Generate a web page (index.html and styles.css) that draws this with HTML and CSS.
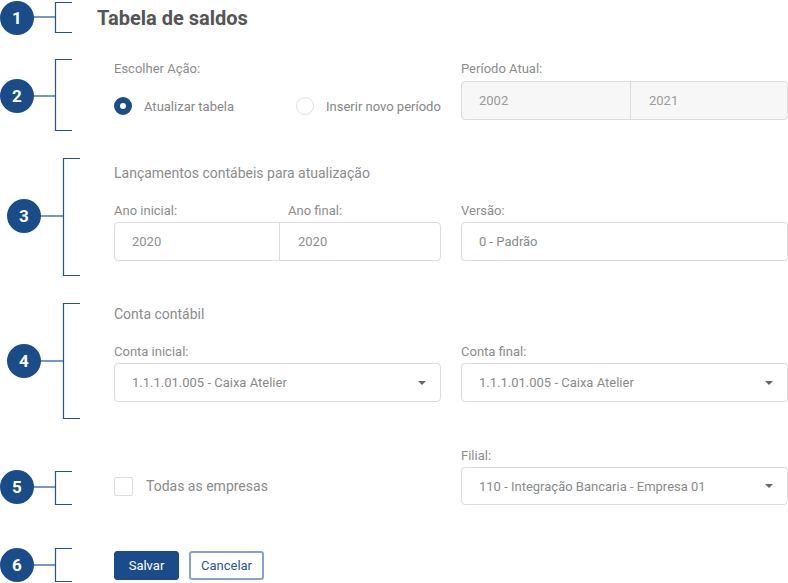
FILE: index.html
```html
<!DOCTYPE html>
<html lang="pt-BR">
<head>
<meta charset="utf-8">
<title>Tabela de saldos</title>
<link rel="stylesheet" href="styles.css">
</head>
<body>
<div class="page">
  <svg class="notes" width="100" height="583" viewBox="0 0 100 583" aria-hidden="true">
    <g class="conn">
      <line x1="30" y1="17" x2="55" y2="17"/>
      <line x1="30" y1="96" x2="55" y2="96"/>
      <line x1="36" y1="216" x2="63" y2="216"/>
      <line x1="36" y1="361" x2="63" y2="361"/>
      <line x1="30" y1="487" x2="55" y2="487"/>
      <line x1="30" y1="565" x2="55" y2="565"/>
    </g>
    <g class="brk">
      <polyline points="72,2.5 55.5,2.5 55.5,32.5 72,32.5"/>
      <polyline points="72,59.5 55.5,59.5 55.5,130.5 72,130.5"/>
      <polyline points="80,158.5 63.5,158.5 63.5,275.5 80,275.5"/>
      <polyline points="80,303.5 63.5,303.5 63.5,418.5 80,418.5"/>
      <polyline points="72,471.5 55.5,471.5 55.5,504.5 72,504.5"/>
      <polyline points="72,548.5 55.5,548.5 55.5,581.5 72,581.5"/>
    </g>
    <g class="badge">
      <circle cx="17" cy="18" r="17"/>
      <circle cx="17" cy="96" r="17"/>
      <circle cx="24" cy="216" r="17"/>
      <circle cx="24" cy="361" r="17"/>
      <circle cx="17" cy="487" r="17"/>
      <circle cx="17" cy="565" r="17"/>
    </g>
    <g class="num">
      <text x="17" y="24">1</text>
      <text x="17" y="102">2</text>
      <text x="24" y="222">3</text>
      <text x="24" y="367">4</text>
      <text x="17" y="493">5</text>
      <text x="17" y="571">6</text>
    </g>
  </svg>

  <main class="form">
    <h1 class="title">Tabela de saldos</h1>

    <section class="row sec-action">
      <div class="field">
        <div class="label">Escolher Ação:</div>
        <div class="radios">
          <div class="radio"><span class="dot dot-on"></span><span>Atualizar tabela</span></div>
          <div class="radio"><span class="dot"></span><span>Inserir novo período</span></div>
        </div>
      </div>
      <div class="field">
        <div class="label">Período Atual:</div>
        <div class="split split-periodo is-disabled">
          <span class="cell">2002</span>
          <span class="cell cell-right">2021</span>
        </div>
      </div>
    </section>

    <section class="group">
      <div class="group-title">Lançamentos contábeis para atualização</div>
      <div class="row">
        <div class="field">
          <div class="split-labels">
            <span class="label">Ano inicial:</span>
            <span class="label label-right">Ano final:</span>
          </div>
          <div class="split split-ano">
            <span class="cell">2020</span>
            <span class="cell cell-right">2020</span>
          </div>
        </div>
        <div class="field">
          <div class="label">Versão:</div>
          <div class="input">0 - Padrão</div>
        </div>
      </div>
    </section>

    <section class="group">
      <div class="group-title">Conta contábil</div>
      <div class="row">
        <div class="field">
          <div class="label">Conta inicial:</div>
          <div class="input select"><span>1.1.1.01.005 - Caixa Atelier</span><span class="caret"></span></div>
        </div>
        <div class="field">
          <div class="label">Conta final:</div>
          <div class="input select"><span>1.1.1.01.005 - Caixa Atelier</span><span class="caret"></span></div>
        </div>
      </div>
    </section>

    <section class="row sec-empresa">
      <div class="check-wrap">
        <div class="check"><span class="box"></span><span>Todas as empresas</span></div>
      </div>
      <div class="field">
        <div class="label">Filial:</div>
        <div class="input select input-short"><span>110 - Integração Bancaria - Empresa 01</span><span class="caret"></span></div>
      </div>
    </section>

    <section class="actions">
      <button class="btn btn-primary" type="button">Salvar</button>
      <button class="btn btn-outline" type="button">Cancelar</button>
    </section>
  </main>
</div>
</body>
</html>
```

FILE: styles.css
```css
* { box-sizing: border-box; }

html, body {
  margin: 0;
  padding: 0;
  background: #ffffff;
}

body {
  font-family: Roboto, "Liberation Sans", Arial, sans-serif;
  color: #8a8a8a;
  width: 788px;
  height: 583px;
  overflow: hidden;
}

.page {
  position: relative;
  width: 788px;
  height: 583px;
}

/* annotation layer (diagram overlay) */
.notes {
  position: absolute;
  left: 0;
  top: 0;
}
.conn line {
  stroke: #7599c3;
  stroke-width: 2;
}
.brk polyline {
  fill: none;
  stroke: #24538f;
  stroke-width: 1.2;
}
.badge circle {
  fill: #1a4c89;
}
.num text {
  fill: #ffffff;
  font-family: Roboto, "Liberation Sans", Arial, sans-serif;
  font-weight: 700;
  font-size: 17px;
  text-anchor: middle;
}

/* form */
.form {
  margin-left: 114px;
  width: 674px;
  display: flex;
  flex-direction: column;
}

.title {
  margin: 6px 0 0 -17px;
  font-size: 20px;
  line-height: 24px;
  font-weight: 700;
  color: #555555;
}

.row {
  display: grid;
  grid-template-columns: 1fr 1fr;
  column-gap: 20px;
}

.sec-action { margin-top: 31px; }

.field {
  display: flex;
  flex-direction: column;
}

.label {
  font-size: 13px;
  line-height: 16px;
  color: #8c8c8c;
}
.field > .label { margin-bottom: 3px; }
.sec-action .field > .label { margin-bottom: 4px; }

.radios {
  margin-top: 15px;
  display: grid;
  grid-template-columns: 182px 1fr;
  height: 20px;
  align-items: center;
}
.radio {
  display: flex;
  align-items: center;
  gap: 12px;
  font-size: 13px;
  color: #868686;
  white-space: nowrap;
}
.dot {
  width: 18px;
  height: 18px;
  border-radius: 50%;
  border: 1px solid #e1e1e1;
  background: #ffffff;
  flex: none;
}
.dot-on {
  border: 6px solid #1a4c89;
  background: #ffffff;
}

.split {
  height: 39px;
  border: 1px solid #dcdcdc;
  border-radius: 4px;
  display: grid;
  align-items: center;
  font-size: 13px;
  color: #8f8f8f;
}
.split-periodo { grid-template-columns: 168px 1fr; }
.split-ano { grid-template-columns: 164px 1fr; }
.is-disabled {
  background: #f7f7f7;
  color: #9a9a9a;
}
.cell {
  height: 100%;
  display: flex;
  align-items: center;
  padding-left: 17px;
}
.cell-right {
  border-left: 1px solid #dcdcdc;
  padding-left: 18px;
}

.split-labels {
  display: grid;
  grid-template-columns: 165px 1fr;
  margin-bottom: 3px;
}
.label-right { padding-left: 9px; }

.group {
  margin-top: 44px;
  display: flex;
  flex-direction: column;
}
.group-title {
  font-size: 14px;
  line-height: 18px;
  color: #8c8c8c;
  margin-bottom: 21px;
}

.input {
  height: 39px;
  border: 1px solid #dcdcdc;
  border-radius: 4px;
  display: flex;
  align-items: center;
  padding: 0 14px 0 17px;
  font-size: 13px;
  color: #8a8a8a;
  white-space: nowrap;
}
.input-short { height: 38px; }
.select { justify-content: space-between; }
.caret {
  width: 0;
  height: 0;
  border-left: 4px solid transparent;
  border-right: 4px solid transparent;
  border-top: 4px solid #666666;
  flex: none;
}

.sec-empresa { margin-top: 46px; }
.check-wrap {
  display: flex;
  align-items: flex-end;
}
.check {
  height: 38px;
  display: flex;
  align-items: center;
  gap: 13px;
  font-size: 14px;
  color: #8a8a8a;
}
.box {
  width: 19px;
  height: 19px;
  border: 1px solid #dcdcdc;
  border-radius: 2px;
  background: #ffffff;
  flex: none;
}

.actions {
  margin-top: 46px;
  display: flex;
  gap: 10px;
}
.btn {
  height: 29px;
  border-radius: 3px;
  font-family: Roboto, "Liberation Sans", Arial, sans-serif;
  font-size: 13px;
  padding: 0;
  cursor: pointer;
}
.btn-primary {
  width: 65px;
  background: #1a4c89;
  color: #ffffff;
  border: 1px solid #1a4c89;
}
.btn-outline {
  width: 75px;
  background: #ffffff;
  color: #2a5890;
  border: 2px solid #86a4c8;
}
```
